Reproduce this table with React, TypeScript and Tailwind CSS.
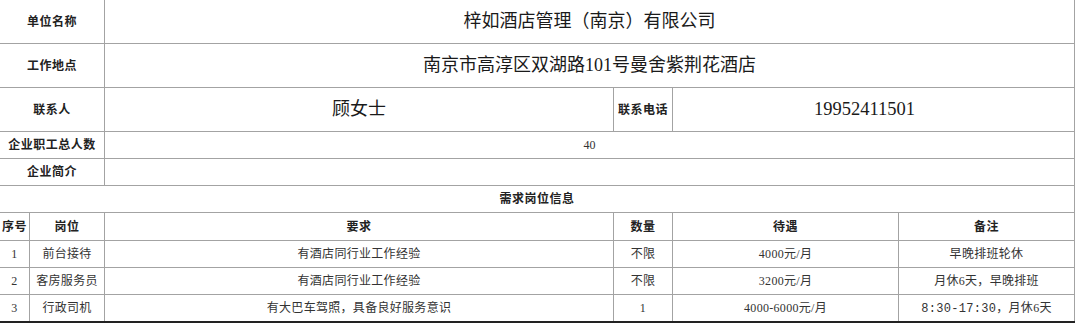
const font = {
  fontFamily: "'Liberation Serif', 'Noto Sans CJK SC', serif",
};

const grid =
  "grid grid-cols-[30px_75px_509px_59px_226px_176px] w-[1075px] border-b border-[#a3a3a3]";
const cell = "flex items-center justify-center border-r border-[#a3a3a3]";
const label = `${cell} col-span-2 text-[12px] font-semibold tracking-[0.5px] text-[#222]`;
const big = "text-[18px] text-[#1a1a1a]";

const jobs = [
  { no: "1", name: "前台接待", req: "有酒店同行业工作经验", qty: "不限", pay: "4000元/月", note: "早晚排班轮休" },
  { no: "2", name: "客房服务员", req: "有酒店同行业工作经验", qty: "不限", pay: "3200元/月", note: "月休6天，早晚排班" },
  { no: "3", name: "行政司机", req: "有大巴车驾照，具备良好服务意识", qty: "1", pay: "4000-6000元/月", note: null },
];

export default function App() {
  return (
    <div className="w-[1080px] h-[323px] bg-white overflow-hidden" style={font}>
      {/* 单位信息 */}
      <div className={`${grid} h-[44px]`}>
        <div className={label}>单位名称</div>
        <div className={`${cell} col-span-4 ${big}`}>梓如酒店管理（南京）有限公司</div>
      </div>
      <div className={`${grid} h-[44px]`}>
        <div className={label}>工作地点</div>
        <div className={`${cell} col-span-4 ${big}`}>南京市高淳区双湖路101号曼舍紫荆花酒店</div>
      </div>
      <div className={`${grid} h-[44px]`}>
        <div className={label}>联系人</div>
        <div className={`${cell} ${big}`}>顾女士</div>
        <div className={`${cell} text-[12px] font-semibold tracking-[0.5px] text-[#222]`}>联系电话</div>
        <div className={`${cell} col-span-2 pr-[18px] text-[18.5px] text-[#1a1a1a]`}>19952411501</div>
      </div>
      <div className={`${grid} h-[27px]`}>
        <div className={label}>企业职工总人数</div>
        <div className={`${cell} col-span-4 text-[12px] text-[#333]`}>40</div>
      </div>
      <div className={`${grid} h-[27px]`}>
        <div className={label}>企业简介</div>
        <div className={`${cell} col-span-4`} />
      </div>
      <div className={`${grid} h-[27px]`}>
        <div className={`${cell} col-span-6 text-[12px] font-semibold tracking-[0.5px] text-[#222]`}>
          需求岗位信息
        </div>
      </div>

      {/* 岗位表头 */}
      <div className={`${grid} h-[28px] text-[12px] font-semibold tracking-[0.5px] text-[#222]`}>
        <div className={cell}>序号</div>
        <div className={cell}>岗位</div>
        <div className={cell}>要求</div>
        <div className={cell}>数量</div>
        <div className={cell}>待遇</div>
        <div className={cell}>备注</div>
      </div>

      {jobs.map((j, i) => (
        <div
          key={j.no}
          className={`${grid} text-[12px] tracking-[0.3px] text-[#333] ${
            i === jobs.length - 1 ? "h-[28px] border-b-2 border-b-[#222]" : "h-[27px]"
          }`}
        >
          <div className={cell}>{j.no}</div>
          <div className={cell}>{j.name}</div>
          <div className={cell}>{j.req}</div>
          <div className={cell}>{j.qty}</div>
          <div className={cell}>{j.pay}</div>
          <div className={cell}>
            {j.note ?? (
              <span>
                <span className="font-['Liberation_Mono',monospace]">8:30-17:30</span>
                ，月休6天
              </span>
            )}
          </div>
        </div>
      ))}
    </div>
  );
}
